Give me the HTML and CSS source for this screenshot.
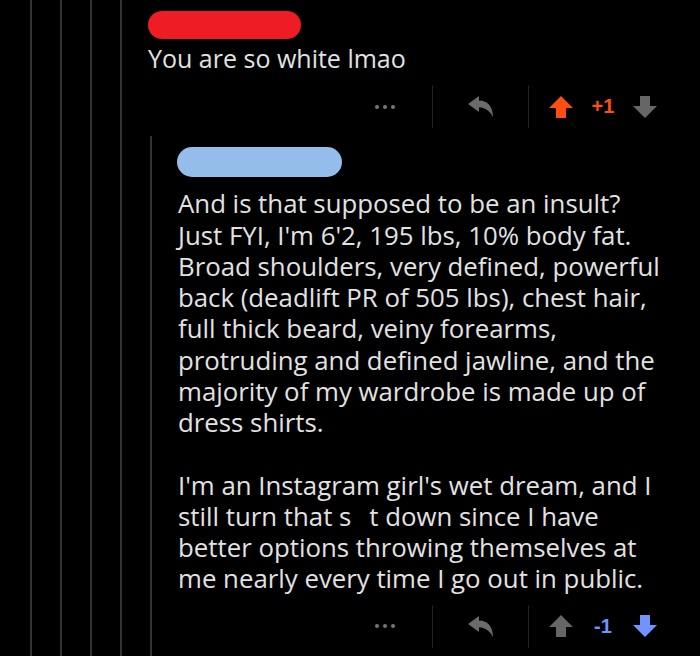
FILE: index.html
```html
<!DOCTYPE html>
<html lang="en">

<head>
    <meta charset="UTF-8">
    <meta name="viewport" content="width=device-width, initial-scale=1.0">
    <title>Thread</title>
    <link rel="stylesheet" href="styles.css">
</head>

<body>
    <div class="thread">
        <div class="level">
            <div class="level">
                <div class="level">
                    <div class="level">

                        <div class="comment">
                            <div class="author red"></div>
                            <p class="body">You are so white lmao</p>
                            <div class="actions">
                                <div class="more"><span></span><span></span><span></span></div>
                                <div class="sep"></div>
                                <div class="reply-btn">
                                    <svg width="26" height="21" viewBox="0 0 26 21">
                                        <path d="M11 0 L0 8 L11 16 V11.5 C17 11.5 21 14 25 21 C25 11 20 4.5 11 4.5 Z" fill="#6b6b6b" />
                                    </svg>
                                </div>
                                <div class="sep"></div>
                                <div class="votes">
                                    <svg width="24" height="22" viewBox="0 0 24 22">
                                        <polygon points="12,0 24,12 17,12 17,22 7,22 7,12 0,12" fill="#ff4e12" />
                                    </svg>
                                    <span class="score up">+1</span>
                                    <svg width="24" height="22" viewBox="0 0 24 22">
                                        <polygon points="12,22 24,10 17,10 17,0 7,0 7,10 0,10" fill="#666" />
                                    </svg>
                                </div>
                            </div>
                        </div>

                        <div class="level reply">
                            <div class="comment last">
                                <div class="author blue"></div>
                                <p class="body">
                                    And is that supposed to be an insult?<br>
                                    Just FYI, I'm 6'2, 195 lbs, 10% body fat.<br>
                                    Broad shoulders, very defined, powerful<br>
                                    back (deadlift PR of 505 lbs), chest hair,<br>
                                    full thick beard, veiny forearms,<br>
                                    protruding and defined jawline, and the<br>
                                    majority of my wardrobe is made up of<br>
                                    dress shirts.
                                </p>
                                <p class="body">
                                    I'm an Instagram girl's wet dream, and I<br>
                                    still turn that s<span class="censor"></span>t down since I have<br>
                                    better options throwing themselves at<br>
                                    me nearly every time I go out in public.
                                </p>
                                <div class="actions">
                                    <div class="more"><span></span><span></span><span></span></div>
                                    <div class="sep"></div>
                                    <div class="reply-btn">
                                        <svg width="26" height="21" viewBox="0 0 26 21">
                                            <path d="M11 0 L0 8 L11 16 V11.5 C17 11.5 21 14 25 21 C25 11 20 4.5 11 4.5 Z" fill="#6b6b6b" />
                                        </svg>
                                    </div>
                                    <div class="sep"></div>
                                    <div class="votes">
                                        <svg width="24" height="22" viewBox="0 0 24 22">
                                            <polygon points="12,0 24,12 17,12 17,22 7,22 7,12 0,12" fill="#666" />
                                        </svg>
                                        <span class="score down">-1</span>
                                        <svg width="24" height="22" viewBox="0 0 24 22">
                                            <polygon points="12,22 24,10 17,10 17,0 7,0 7,10 0,10" fill="#7193ff" />
                                        </svg>
                                    </div>
                                </div>
                            </div>
                        </div>

                    </div>
                </div>
            </div>
        </div>
    </div>
</body>

</html>
```

FILE: styles.css
```css
body {
    margin: 0;
    background-color: #000;
    color: #e2e2e2;
    font-family: "Open Sans", "Liberation Sans", sans-serif;
    height: 656px;
    overflow: hidden;
}

.thread {
    padding-left: 2px;
}

.level {
    margin-left: 28px;
    border-left: 2px solid #333;
}

.comment {
    padding: 11px 0 0 26px;
}

.comment.last {
    padding-bottom: 40px;
}

.author {
    height: 28px;
    border-radius: 14px;
}

.red {
    width: 153px;
    background-color: #ee1c25;
}

.blue {
    width: 165px;
    height: 30px;
    margin-left: -1px;
    border-radius: 15px;
    background-color: #95bdeb;
}

.body {
    margin: 4px 0 0 0;
    font-size: 25px;
    line-height: 31.25px;
}

.reply .body {
    margin-top: 11px;
    font-size: 25.8px;
}

.reply .body + .body {
    margin-top: 31.25px;
}

.censor {
    display: inline-block;
    width: 18px;
}

.actions {
    display: flex;
    justify-content: flex-end;
    align-items: center;
    height: 43px;
    margin-top: 11px;
    padding-right: 43px;
}

.reply .actions {
    margin-top: 10px;
}

.sep {
    width: 1px;
    height: 43px;
    background-color: #222;
}

.more {
    width: 95px;
    display: flex;
    justify-content: center;
    gap: 4px;
}

.more span {
    width: 4px;
    height: 4px;
    border-radius: 50%;
    background-color: #777;
}

.reply-btn {
    width: 95px;
    display: flex;
    justify-content: center;
}

.votes {
    display: flex;
    align-items: center;
    padding-left: 20px;
}

.score {
    width: 60px;
    text-align: center;
    font-family: "Liberation Sans", sans-serif;
    font-size: 20px;
    font-weight: bold;
}

.score.up {
    color: #ff4e12;
}

.score.down {
    color: #7193ff;
}

.reply {
    margin-top: 8px;
}
```
